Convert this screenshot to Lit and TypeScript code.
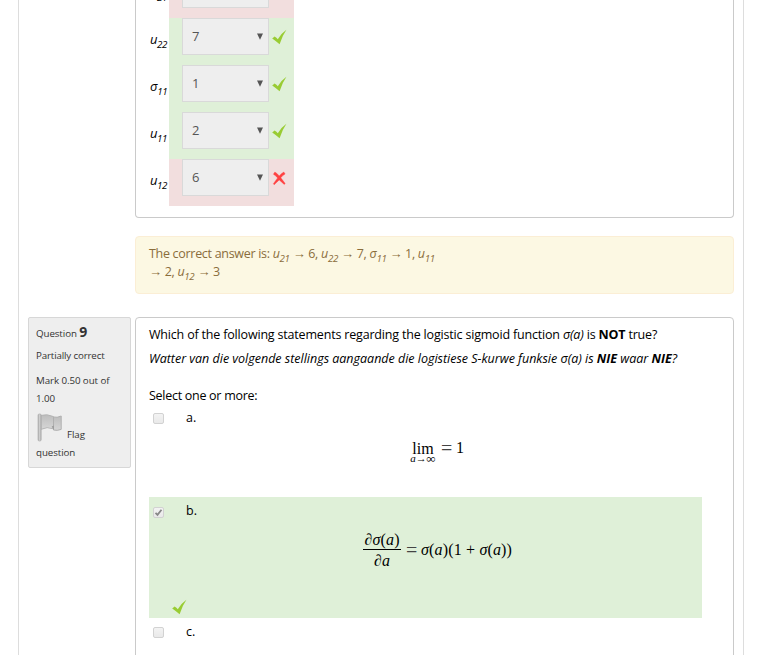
import { LitElement, html, css, svg } from "lit";
import { customElement } from "lit/decorators.js";

interface MatchRow {
  symbol: string;
  index: string;
  value: string;
  correct: boolean;
}

const ROWS: MatchRow[] = [
  { symbol: "u", index: "21", value: "", correct: false },
  { symbol: "u", index: "22", value: "7", correct: true },
  { symbol: "σ", index: "11", value: "1", correct: true },
  { symbol: "u", index: "11", value: "2", correct: true },
  { symbol: "u", index: "12", value: "6", correct: false },
];

const tick = html`<svg class="mark" viewBox="0 0 16 16" width="16" height="16">
  ${svg`<path d="M1.2 9.4 L3.6 7.4 Q5.6 8.6 6.8 10.2 Q10 4.6 15.4 .8 Q11.2 7 8.6 15.2 Q5 12 1.2 9.4Z" fill="#99cc33"/>`}
</svg>`;

const cross = html`<svg class="mark" viewBox="0 0 16 16" width="16" height="16">
  ${svg`<path d="M3.9 2 Q6.4 3.6 8.2 6 Q10.2 3.4 12.8 2 L14.1 4 Q11.6 5.3 9.8 7.8 Q12 10.6 14.2 13.6 L13.2 14.4 Q10.6 12 8.2 9.9 Q5.8 12 3.2 14.8 L2.4 13.8 Q4.4 10.8 6.6 7.9 Q4.6 5.4 2.4 4.2Z" fill="#ff4141" stroke="#ff4141" stroke-width=".4"/>`}
</svg>`;

const flag = html`<svg class="flag" viewBox="0 0 28 32" width="28" height="32">
  ${svg`<defs>
    <linearGradient id="cloth" x1="0" y1="0" x2="0" y2="1"><stop offset="0" stop-color="#bdbdbd"/><stop offset="1" stop-color="#d6d6d6"/></linearGradient>
    <linearGradient id="pole" x1="0" y1="0" x2="1" y2="0"><stop offset="0" stop-color="#a9a9a9"/><stop offset=".5" stop-color="#d0d0d0"/><stop offset="1" stop-color="#a8a8a8"/></linearGradient>
  </defs>
  <path d="M5 4.4 Q11 2.6 17.5 5.6 V17.8 Q11 15.2 5 18.3Z" fill="url(#cloth)" stroke="#b4b4b4"/>
  <path d="M17.5 6 Q21 7 25.2 5 V18.4 Q21 20 17.5 19Z" fill="url(#cloth)" stroke="#b0b0b0"/>
  <path d="M15.6 15.6 L18 14.5 V19Z" fill="#9d9d9d"/>
  <rect x="2" y="3" width="3.2" height="27" rx="1.2" fill="url(#pole)" stroke="#b2b2b2" stroke-width=".7"/>`}
</svg>`;

@customElement("app-root")
export class AppRoot extends LitElement {
  static styles = css`
    :host {
      display: block;
      height: 655px;
      overflow: hidden;
      background: #fff;
      color: #000;
      font: 12.5px/18px "Open Sans", "Noto Sans", sans-serif;
    }
    * { box-sizing: border-box; }
    .page {
      width: 726px;
      height: 655px;
      margin-left: 18px;
      border: solid #ddd;
      border-width: 0 1px;
      overflow: hidden;
    }
    .content { margin-left: 116px; width: 599px; }
    .box { border: 1px solid #cacaca; border-radius: 4px; background: #fff; }
    .matching {
      height: 247px;
      margin-top: -29px;
      padding-left: 13px;
      border-top: 0;
      font-size: 13px;
    }
    .row { display: flex; height: 47px; }
    .symbol {
      width: 20px;
      padding: 12px 0 0 1px;
      white-space: nowrap;
      letter-spacing: -0.4px;
    }
    .index {
      font-size: 9.75px;
      line-height: 0;
      position: relative;
      top: 4px;
    }
    .answer { display: flex; width: 125px; padding-left: 13px; }
    .good { background: #dff0d8; }
    .bad { background: #f2dede; }
    .select {
      display: flex;
      justify-content: space-between;
      width: 87px;
      height: 37px;
      padding: 8px 5px 0 9px;
      border: 1px solid #d9d9d9;
      background: #eee;
      color: #555;
    }
    .arrow { width: 6px; height: 7px; margin-top: 5.5px; }
    .mark { display: block; flex: none; }
    .answer .mark { margin: 10.5px 0 0 2px; }
    .feedback {
      height: 58px;
      margin-top: 18px;
      padding: 8px 13px;
      border: 1px solid #fbeed5;
      border-radius: 4px;
      background: #fcf8e3;
      color: #8a6d3b;
      white-space: nowrap;
      letter-spacing: -0.3px;
    }
    .to { font: 13px/0 "Liberation Sans", sans-serif; }
    .fit { width: max-content; }
    .question { display: flex; gap: 4px; margin: 23px 0 0 9px; }
    .info {
      width: 103px;
      height: 151px;
      padding: 5px 7px;
      border: 1px solid #d7d7d7;
      border-radius: 2px;
      background: #eee;
      color: #333;
      font-size: 9.75px;
      letter-spacing: -0.08px;
      white-space: nowrap;
    }
    .number { font-size: 14px; font-weight: 700; }
    .state { margin-top: 4px; letter-spacing: -0.15px; }
    .grade { margin-top: 7px; }
    .flagging { display: flex; height: 34px; margin-top: 2px; }
    .flagging span { margin: 16px 0 0 3px; }
    .flag { display: block; margin-top: 1px; }
    .body {
      width: 599px;
      height: 420px;
      padding: 8px 13px;
      white-space: nowrap;
    }
    .prompt { letter-spacing: -0.182px; }
    .translated { margin-top: 6px; font-style: italic; letter-spacing: -0.01px; }
    .select-text { margin-top: 19px; letter-spacing: -0.28px; }
    .option { display: flex; width: 553px; }
    .a { height: 90px; margin-top: 2px; }
    .b { height: 121px; position: relative; padding-top: 4px; }
    .c { padding-top: 3px; }
    .check {
      flex: none;
      width: 11px;
      height: 11px;
      margin: 6px 0 0 4px;
      border: 1px solid #d2d2d2;
      border-radius: 2px;
      background: linear-gradient(#f3f3f3, #e9e9e9);
    }
    .check svg { display: block; }
    .letter { margin-left: 22px; width: 16px; }
    .a .letter { margin-top: 2px; }
    .b .letter { margin-top: 1px; }
    .c .letter { margin-top: 2px; }
    .option .side { flex: none; width: 53px; display: flex; }
    .math {
      flex: 1;
      font-family: "Liberation Serif", serif;
      font-size: 16px;
      display: flex;
      align-items: center;
    }
    .a .math { height: 28px; margin-top: 30px; padding-left: 208px; }
    .b .math { height: 38px; margin-top: 30px; padding-left: 161px; }
    .limit { width: 26px; text-align: center; line-height: 17px; }
    .under {
      display: flex;
      justify-content: center;
      font-size: 11px;
      line-height: 9px;
      margin-top: -3px;
    }
    .under span { font-size: 13px; margin-left: -0.5px; }
    .eq { width: 12px; margin: 0 3px 0 5px; font-size: 20px; line-height: 16px; color: #444; }
    .a .eq, .a .one { margin-top: -7px; }
    .fraction { width: 38px; text-align: center; line-height: 18px; }
    .numerator { border-bottom: 1px solid #000; letter-spacing: 0.15px; }
    .denominator { padding-top: 2px; }
    .rhs { letter-spacing: 0.16px; }
    .b .mark { position: absolute; left: 22px; top: 102px; }
  `;

  private symbol(s: string, n: string) {
    return html`<i>${s}<span class="index">${n}</span></i>`;
  }

  private row(r: MatchRow) {
    return html`<div class="row">
      <div class="symbol">${this.symbol(r.symbol, r.index)}</div>
      <div class="answer ${r.correct ? "good" : "bad"}">
        <div class="select">
          <span>${r.value}</span>
          <svg class="arrow" viewBox="0 0 6 7"><path d="M0 .5H6L3 6.8Z" fill="#555" /></svg>
        </div>
        ${r.correct ? tick : cross}
      </div>
    </div>`;
  }

  render() {
    const to = html`<span class="to">→</span>`;
    return html`<main class="page">
      <div class="content">
        <section class="box matching">${ROWS.map((r) => this.row(r))}</section>
        <section class="feedback">
          <div class="fit">The correct answer is: ${this.symbol("u", "21")} ${to} 6, ${this.symbol("u", "22")} ${to} 7, ${this.symbol("σ", "11")} ${to} 1, ${this.symbol("u", "11")}</div>
          <div class="fit">${to} 2, ${this.symbol("u", "12")} ${to} 3</div>
        </section>
      </div>
      <section class="question">
        <aside class="info">
          <div>Question <span class="number">9</span></div>
          <div class="state">Partially correct</div>
          <div class="grade">Mark 0.50 out of<br />1.00</div>
          <div class="flagging">${flag}<span>Flag</span></div>
          <div>question</div>
        </aside>
        <div class="box body">
          <div class="fit prompt">Which of the following statements regarding the logistic sigmoid function <i>σ(a)</i> is <b>NOT</b> true?</div>
          <div class="fit translated">Watter van die volgende stellings aangaande die logistiese S-kurwe funksie σ(a) is <b>NIE</b> waar <b>NIE</b>?</div>
          <div class="fit select-text">Select one or more:</div>
          <div class="option a">
            <div class="side"><span class="check"></span><span class="letter">a.</span></div>
            <div class="math">
              <div class="limit">lim<div class="under"><i>a</i>→<span>∞</span></div></div>
              <span class="eq">=</span><span class="one">1</span>
            </div>
          </div>
          <div class="option b good">
            <div class="side">
              <span class="check"><svg viewBox="0 0 9 9" width="9" height="9"><path d="M1.5 4.8L3.5 6.8L7.5 1.8" fill="none" stroke="#888" stroke-width="1.8" /></svg></span>
              <span class="letter">b.</span>
            </div>
            <div class="math">
              <div class="fraction">
                <div class="numerator">∂<i>σ</i>(<i>a</i>)</div>
                <div class="denominator">∂<i>a</i></div>
              </div>
              <span class="eq">=</span><span class="rhs"><i>σ</i>(<i>a</i>)(1 + <i>σ</i>(<i>a</i>))</span>
            </div>
            ${tick}
          </div>
          <div class="option c">
            <div class="side"><span class="check"></span><span class="letter">c.</span></div>
          </div>
        </div>
      </section>
    </main>`;
  }
}
